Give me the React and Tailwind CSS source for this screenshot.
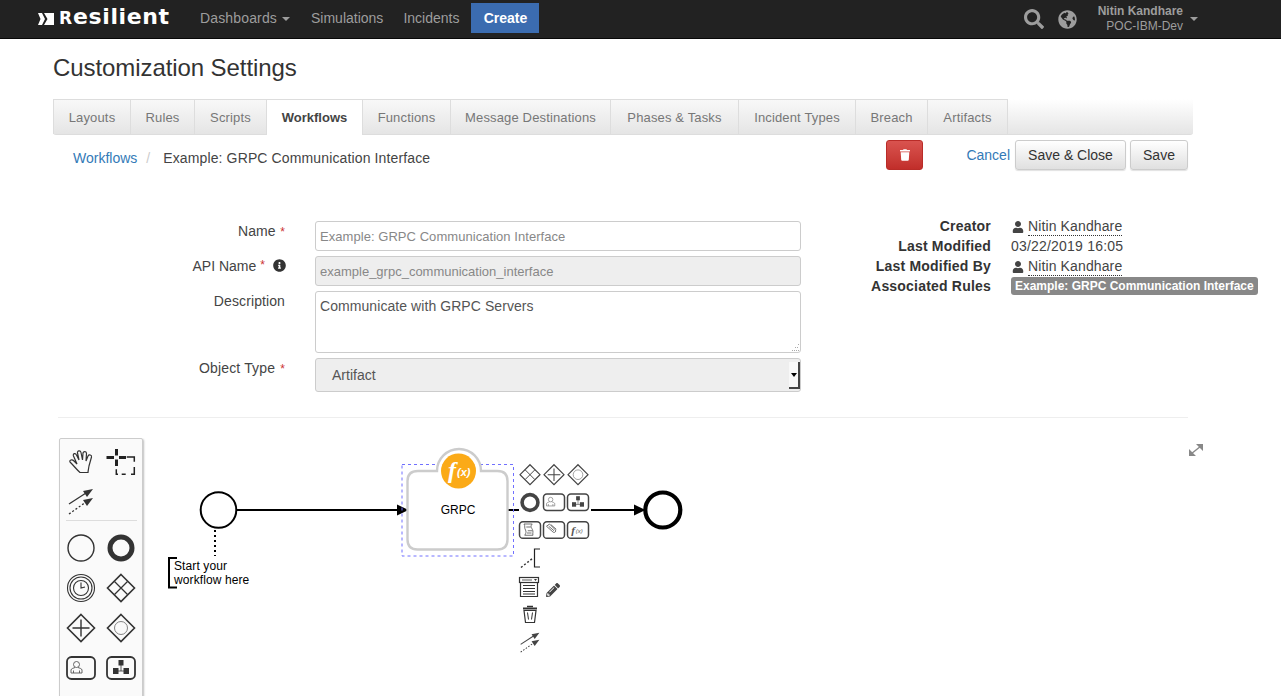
import React from 'react'
import { FaSearch, FaGlobeAmericas, FaUser, FaTrash, FaInfoCircle, FaPencilAlt } from 'react-icons/fa'

const tabs = [
  { label: 'Layouts', w: 'w-[78px]' },
  { label: 'Rules', w: 'w-[64px]' },
  { label: 'Scripts', w: 'w-[72px]' },
  { label: 'Workflows', w: 'w-[96px]' },
  { label: 'Functions', w: 'w-[88px]' },
  { label: 'Message Destinations', w: 'w-[160px]' },
  { label: 'Phases & Tasks', w: 'w-[128px]' },
  { label: 'Incident Types', w: 'w-[117px]' },
  { label: 'Breach', w: 'w-[72px]' },
  { label: 'Artifacts', w: 'w-[80px]' },
]

const Hand = () => (
  <path
    fill="none"
    stroke="#333"
    strokeWidth="1.2"
    d="M-1 10.5C-4 8-7 4-11 0C-12-2-9-3-7-1L-4 2L-7.5-6C-8.5-8.5-5.5-9.5-4.5-7L-2-2L-3.5-9C-4-11.5-.5-12 0-9.5L1.5-2L2-9C2.5-11 5.5-11 5.5-8.5L5-1L7-6C8-8 11-7 10.5-5L8 4C7.5 7 7 9 7 10.5Z"
  />
)

const Lasso = () => (
  <g fill="none" stroke="#222">
    <path strokeWidth="3" d="M-4.5-13V-6.5M-4.5-2.5V4M-14.5-4.5H-7M-2-4.5H5" />
    <path strokeWidth="1.5" d="M5.7-5H13.3V-.3M13.3 5V12.3H10M4.7 12.3H.7M-3 12.3H-4.7V7.3" />
  </g>
)

const Connect = ({ color = '#333' }) => (
  <g>
    <path stroke={color} strokeWidth="1.3" d="M-12 3L5-8" />
    <path fill={color} d="M12-12L2-10L6-4Z" />
    <path stroke={color} strokeWidth="1.3" strokeDasharray="2 2" d="M-12 13L5 1" />
    <path fill={color} d="M12-3L2-1L6 5Z" />
  </g>
)

const Circle = () => <circle r="13" fill="none" stroke="#333" strokeWidth="1.4" />
const ThickCircle = ({ color = '#333' }) => <circle r="11" fill="none" stroke={color} strokeWidth="5" />

const Timer = () => (
  <g fill="none" stroke="#333" strokeWidth="1.1">
    <circle r="13.5" />
    <circle r="11" />
    <circle r="7.5" />
    <path d="M0-5.5V0L4-1" />
  </g>
)

const Diamond = ({ kind, color = '#333', sw = 1.6 }) => (
  <g fill="none" stroke={color}>
    <path strokeWidth={sw} d="M0-13.5L13.5 0L0 13.5L-13.5 0Z" />
    {kind === 'x' && <path strokeWidth={sw - 0.3} d="M-6.5-6.5L6.5 6.5M6.5-6.5L-6.5 6.5" />}
    {kind === 'plus' && <path strokeWidth={sw - 0.2} d="M0-8.5V8.5M-8.5 0H8.5" />}
    {kind === 'o' && <circle r="6.5" strokeWidth="0.9" stroke="#777" />}
  </g>
)

const TaskBox = ({ children, color = '#333', sw = 1.8 }) => (
  <g>
    <rect x="-14" y="-11" width="28" height="22" rx="4.5" fill="none" stroke={color} strokeWidth={sw} />
    {children}
  </g>
)

const UserGlyph = ({ color = '#555' }) => (
  <g fill="none" stroke={color} strokeWidth="0.9">
    <circle cx="-4.5" cy="-3.5" r="3" />
    <path d="M-10 5V2C-10 .5-7 0-6-.5M1 5V2C1 .5-2 0-3-.5M-10 5H1M-7.5 5V2.5M-1.5 5V2.5" />
  </g>
)

const SubGlyph = ({ color = '#333' }) => (
  <g fill={color}>
    <rect x="-2.5" y="-8" width="5" height="5.5" />
    <rect x="-8" y="0" width="5.5" height="6" />
    <rect x="2.5" y="0" width="5.5" height="6" />
    <path d="M0-3V3M-3 3H3" stroke={color} strokeWidth="0.8" />
  </g>
)

const ScriptGlyph = () => (
  <g fill="none" stroke="#555" strokeWidth="1.1">
    <path d="M-8-8H3C0-5 2-3 3-1C5 2 3 5 4 7H-7C-5 4-5 2-6 0C-8-3-6-5-8-8Z" />
    <path d="M-5-4H1M-3 1H3M-4 4H2" />
  </g>
)

const AttachGlyph = () => (
  <g fill="none" stroke="#555" strokeWidth="1.1">
    <path d="M-10-5L-6-8L2 0C3 2 1 4-1 3L-10-5ZM-7-5L0 1M-4-7L3-1" />
  </g>
)

const FxGlyph = () => (
  <g fill="#555" fontFamily="'Liberation Serif', serif" fontStyle="italic">
    <text x="-9" y="5" fontSize="15" fontWeight="700">f</text>
    <text x="-3" y="3.5" fontSize="8" fontFamily="'Liberation Sans', sans-serif">(x)</text>
  </g>
)

const FormGlyph = () => (
  <g>
    <rect x="-9.5" y="-9.5" width="19" height="5" fill="#fff" stroke="#333" strokeWidth="1.2" />
    <path d="M-7-7H3" stroke="#666" strokeWidth="1.1" />
    <path d="M5-8H8L6.5-6Z" fill="#333" />
    <path d="M-8.5-4.5V9.5H8.5V-4.5" fill="none" stroke="#333" strokeWidth="1.2" />
    <path d="M-6-1.5H6M-6 1.5H6M-6 4.5H6M-6 7H6" stroke="#333" strokeWidth="1" />
  </g>
)

const TrashGlyph = () => (
  <g fill="none" stroke="#333">
    <path strokeWidth="2" d="M-7-6H7" />
    <path strokeWidth="1.5" d="M-3-8H3" />
    <path strokeWidth="1.2" d="M-6-4L-4.5 8H4.5L6-4Z" />
    <path strokeWidth="1" d="M-2.5-2L-1.5 5M2.5-2L1.5 5" />
  </g>
)

// small palette icon, drawn around the middle of a 40x40 cell
const Cell = ({ children }) => (
  <svg viewBox="-20 -20 40 40" className="w-10 h-10 block overflow-visible">{children}</svg>
)

function Palette() {
  return (
    <div className="w-[84px] ml-[6px] h-[290px] shrink-0 bg-[#fafafa] border border-[#ccc] rounded-[2px] shadow-[1px_1px_2px_rgba(0,0,0,0.25)] pl-[1px] pt-[3px]">
      <div className="grid grid-cols-[40px_40px] auto-rows-[39px]">
        <Cell><Hand /></Cell>
        <Cell><Lasso /></Cell>
        <Cell><Connect /></Cell>
      </div>
      <div className="h-px bg-[#ddd] mx-[5px] mb-[7px]" />
      <div className="grid grid-cols-[40px_40px] auto-rows-[40px]">
        <Cell><Circle /></Cell>
        <Cell><ThickCircle /></Cell>
        <Cell><Timer /></Cell>
        <Cell><Diamond kind="x" /></Cell>
        <Cell><Diamond kind="plus" /></Cell>
        <Cell><Diamond kind="o" /></Cell>
        <Cell><TaskBox><UserGlyph /></TaskBox></Cell>
        <Cell><TaskBox><SubGlyph /></TaskBox></Cell>
        <Cell><TaskBox /></Cell>
        <Cell><TaskBox /></Cell>
      </div>
    </div>
  )
}

function Diagram() {
  return (
    <svg viewBox="143 438 1138 258" className="w-[1138px] h-[258px] block shrink-0" fontFamily="'Liberation Sans', Arial, sans-serif">
      {/* flows */}
      <path d="M237 510H398" stroke="#000" strokeWidth="2" />
      <path d="M397 504.5L408.5 510L397 515.5Z" fill="#000" />
      <path d="M508 510H519" stroke="#000" strokeWidth="2" />
      <path d="M591 510H635" stroke="#000" strokeWidth="2" />
      <path d="M634 504.5L645.5 510L634 515.5Z" fill="#000" />

      {/* start event + note */}
      <circle cx="218.5" cy="510" r="17.8" fill="#fff" stroke="#000" strokeWidth="2" />
      <path d="M215 530V556" stroke="#000" strokeWidth="2" strokeDasharray="2 3" />
      <path d="M177 558H169V587.5H177" fill="none" stroke="#000" strokeWidth="2" />
      <text x="174" y="570" fontSize="12" fill="#000" letterSpacing="0.1">Start your</text>
      <text x="174" y="584" fontSize="12" fill="#000" letterSpacing="0.1">workflow here</text>

      {/* end event */}
      <circle cx="662.8" cy="510" r="17.5" fill="#fff" stroke="#000" strokeWidth="4.2" />

      {/* function task */}
      <rect x="402" y="464.5" width="111.5" height="91.5" fill="none" stroke="#7070ff" strokeWidth="1" strokeDasharray="3 3" />
      <path
        d="M418 471H437A22 22 0 0 1 481 471H497.5Q507.5 471 507.5 481V539.5Q507.5 549.5 497.5 549.5H417.5Q407.5 549.5 407.5 539.5V481Q407.5 471 418 471Z"
        fill="#fff"
        stroke="#ccc"
        strokeWidth="2.4"
      />
      <circle cx="458.5" cy="471" r="17.5" fill="#fbaa17" />
      <text x="448" y="478" fontSize="24" fontWeight="700" fontStyle="italic" fill="#fff" fontFamily="'Liberation Serif', serif">f</text>
      <text x="457" y="476" fontSize="11" fontWeight="700" fontStyle="italic" fill="#fff">(x)</text>
      <text x="458" y="514" fontSize="12" textAnchor="middle" fill="#000">GRPC</text>

      {/* context pad */}
      <g transform="translate(530 474.7) scale(.74)"><Diamond kind="x" color="#444" sw={1.6} /></g>
      <g transform="translate(554 474.7) scale(.74)"><Diamond kind="plus" color="#444" sw={1.6} /></g>
      <g transform="translate(578 474.7) scale(.74)"><Diamond kind="o" color="#444" sw={1.6} /></g>
      <g transform="translate(530 502.5) scale(.72)"><ThickCircle color="#444" /></g>
      <g transform="translate(554 502.2) scale(.75)"><TaskBox color="#444" sw={2}><UserGlyph color="#777" /></TaskBox></g>
      <g transform="translate(578 502.2) scale(.75)"><TaskBox color="#444" sw={2}><SubGlyph color="#444" /></TaskBox></g>
      <g transform="translate(530 530) scale(.75)"><TaskBox color="#444" sw={2}><ScriptGlyph /></TaskBox></g>
      <g transform="translate(554 530) scale(.75)"><TaskBox color="#444" sw={2}><AttachGlyph /></TaskBox></g>
      <g transform="translate(578 530) scale(.75)"><TaskBox color="#444" sw={2}><FxGlyph /></TaskBox></g>
      <path d="M521 567.5L533 558" stroke="#333" strokeWidth="1.5" strokeDasharray="2 2" />
      <path d="M540 549H534.5V567H540" fill="none" stroke="#222" strokeWidth="1.2" />
      <g transform="translate(529 587)"><FormGlyph /></g>
      <foreignObject x="546" y="583" width="14" height="14">
        <FaPencilAlt className="w-[14px] h-[14px] text-[#444]" />
      </foreignObject>
      <g transform="translate(530 614.5)"><TrashGlyph /></g>
      <g transform="translate(530 642) scale(.78)"><Connect color="#444" /></g>

      {/* fullscreen toggle */}
      <g fill="#888" stroke="#888">
        <path strokeWidth="1.4" d="M1191 454L1201 446" />
        <path stroke="none" d="M1196 444H1203V451ZM1189 449V456H1196Z" />
      </g>
    </svg>
  )
}

const userLink = 'border-b border-dotted border-[#333] leading-[17px] tracking-[0.12px] text-[#444]'

export default function App() {
  return (
    <div className="h-[696px] overflow-hidden bg-white text-[14px] text-[#333] font-['Liberation_Sans',Arial,sans-serif]">
      {/* Top bar */}
      <nav className="h-[39px] bg-[#222] border-b border-[#080808] flex items-center pl-[38px] pr-[83px]">
        <svg viewBox="0 0 16 12" className="w-4 h-3 shrink-0 mb-[1px]">
          <path fill="#fff" d="M0 0H4L7 6L4 12H0L2.5 6ZM6 0H16V12H6L9.5 6Z" />
        </svg>
        <span className="ml-[5px] w-[141px] text-white text-[22px] leading-none font-bold font-['DejaVu_Sans',sans-serif] tracking-[0.6px] mb-[4px] whitespace-nowrap">
          <span className="text-[17px] tracking-[1px]">R</span>esilient
        </span>
        <span className="text-[#9d9d9d] flex items-center tracking-[0.15px] mb-[2px]">
          Dashboards
          <span className="ml-[5px] mt-[1px] border-x-[4px] border-x-transparent border-t-[4px] border-t-[#9d9d9d]" />
        </span>
        <span className="text-[#9d9d9d] ml-[21px] mb-[2px]">Simulations</span>
        <span className="text-[#9d9d9d] ml-[20px] mb-[2px]">Incidents</span>
        <span className="ml-[12px] mb-[3px] w-[68px] h-[30px] bg-[#3b6cb0] text-white font-bold flex items-center justify-center pt-[1px]">Create</span>

        <div className="ml-auto flex items-center">
          <FaSearch className="w-5 h-5 text-[#9d9d9d]" />
          <FaGlobeAmericas className="w-[19px] h-[19px] text-[#9d9d9d] ml-[14px]" />
          <div className="ml-[21px] text-right text-[12px] leading-[15px] text-[#9d9d9d]">
            <div className="font-bold">Nitin Kandhare</div>
            <div>POC-IBM-Dev</div>
          </div>
          <span className="ml-[7px] border-x-[4px] border-x-transparent border-t-[4px] border-t-[#9d9d9d]" />
        </div>
      </nav>

      <h1 className="ml-[53px] mt-[16px] text-[24px] leading-[26px] font-normal tracking-[-0.08px]">Customization Settings</h1>

      {/* Tabs */}
      <div className="ml-[53px] mt-[18px] w-[1140px] h-[36px] flex bg-gradient-to-b from-white to-[#e5e5e5] rounded-b-[3px] border-b border-[#ddd]">
        {tabs.map((t) => (
          <div
            key={t.label}
            className={
              t.label === 'Workflows'
                ? `${t.w} h-[36px] pt-[1px] flex items-center justify-center text-[13px] font-bold text-[#444] bg-white border-t border-r border-[#ddd]`
                : `${t.w} h-[35px] pt-[1px] flex items-center justify-center text-[13px] tracking-[0.15px] text-[#777] border-t border-r border-[#ddd] first:border-l bg-gradient-to-b from-[#f8f8f8] to-[#e5e5e5]`
            }
          >
            {t.label}
          </div>
        ))}
      </div>

      {/* Breadcrumb and actions */}
      <div className="ml-[53px] mt-[5px] w-[1135px] h-[30px] flex items-center">
        <a className="ml-[20px] text-[#337ab7] mt-[6px]">Workflows</a>
        <span className="ml-[9px] text-[#ccc] mt-[6px]">/</span>
        <span className="ml-[13px] mt-[6px] text-[#444] tracking-[0.13px]">Example: GRPC Communication Interface</span>
        <div className="ml-auto flex items-center">
          <button className="w-[37px] h-[30px] rounded-[3px] border border-[#b92c28] bg-gradient-to-b from-[#d9534f] to-[#c12e2a] flex items-center justify-center">
            <FaTrash className="w-[10px] h-[12px] text-white" />
          </button>
          <a className="ml-[43px] text-[#337ab7]">Cancel</a>
          <button className="ml-[5px] w-[111px] h-[30px] rounded-[3px] border border-[#ccc] bg-gradient-to-b from-white to-[#e0e0e0] shadow-[0_1px_1px_rgba(0,0,0,0.12)]">Save &amp; Close</button>
          <button className="ml-[4px] w-[58px] h-[30px] rounded-[3px] border border-[#ccc] bg-gradient-to-b from-white to-[#e0e0e0] shadow-[0_1px_1px_rgba(0,0,0,0.12)]">Save</button>
        </div>
      </div>

      {/* Form + details */}
      <div className="ml-[53px] mt-[51px] flex">
        <div className="w-[748px] grid grid-cols-[232px_486px] gap-x-[30px] gap-y-[5px] text-[#444]">
          <div className="text-right">Name <span className="text-[#c33] text-[12px] ml-[1px]">*</span></div>
          <input readOnly value="Example: GRPC Communication Interface" className="h-[30px] px-[4px] border border-[#ccc] rounded-[3px] text-[13px] tracking-[0.05px] text-[#888] outline-none" />

          <div className="flex justify-end items-start -mr-[1px]">
            API Name <span className="text-[#c33] text-[12px] ml-[4px]">*</span>
            <FaInfoCircle className="w-[13px] h-[13px] ml-[8px] mt-[3px] text-[#333]" />
          </div>
          <input readOnly value="example_grpc_communication_interface" className="h-[30px] px-[4px] border border-[#ccc] rounded-[3px] bg-[#eee] text-[13px] text-[#888] outline-none" />

          <div className="text-right tracking-[0.1px]">Description</div>
          <div className="relative h-[62px]">
            <textarea readOnly value="Communicate with GRPC Servers" className="block w-full h-[62px] px-[4px] py-[4px] border border-[#ccc] rounded-[3px] text-[14px] leading-[20px] tracking-[0.07px] text-[#555] outline-none resize-none" />
            <svg viewBox="0 0 8 8" className="absolute right-[2px] bottom-[2px] w-2 h-2">
              <path stroke="#aaa" strokeWidth="1" strokeDasharray="1 1" d="M1 7.5H8M4 4.5H8M7 1.5H8" />
            </svg>
          </div>

          <div className="text-right tracking-[0.15px]">Object Type <span className="text-[#c33] text-[12px] ml-[1px]">*</span></div>
          <div className="h-[34px] pl-[16px] border border-[#ccc] rounded-[3px] bg-[#eee] text-[#555] flex items-center relative">
            Artifact
            <div className="absolute right-0 top-[3px] bottom-[2px] w-[11px] bg-[#f8f8f8] border-r-2 border-b-2 border-[#444] flex items-center justify-center">
              <span className="border-x-[3px] border-x-transparent border-t-[4px] border-t-black" />
            </div>
          </div>
        </div>

        <div className="ml-[190px] -mt-[5px] grid grid-cols-[auto_auto] gap-x-[20px] auto-rows-[20px] leading-[20px] self-start">
          <div className="font-bold text-right -ml-[190px] tracking-[0.2px]">Creator</div>
          <div className="flex items-center pt-[1px]">
            <FaUser className="w-[12px] h-[12px] ml-[1px] mr-[4px] text-[#444]" />
            <span className={userLink}>Nitin Kandhare</span>
          </div>
          <div className="font-bold text-right -ml-[190px] tracking-[0.2px]">Last Modified</div>
          <div className="tracking-[0.2px] text-[#444]">03/22/2019 16:05</div>
          <div className="font-bold text-right -ml-[190px] tracking-[0.2px]">Last Modified By</div>
          <div className="flex items-center pt-[1px]">
            <FaUser className="w-[12px] h-[12px] ml-[1px] mr-[4px] text-[#444]" />
            <span className={userLink}>Nitin Kandhare</span>
          </div>
          <div className="font-bold text-right -ml-[190px] tracking-[0.2px]">Associated Rules</div>
          <div className="flex items-center">
            <span className="bg-[#888] text-white font-bold text-[12px] leading-[18px] px-[4px] rounded-[3px]">Example: GRPC Communication Interface</span>
          </div>
        </div>
      </div>

      <div className="ml-[58px] mt-[25px] w-[1130px] h-px bg-[#eee]" />

      {/* Workflow editor */}
      <div className="mt-[20px] flex ml-[53px] w-[1228px] overflow-hidden">
        <Palette />
        <Diagram />
      </div>
    </div>
  )
}
